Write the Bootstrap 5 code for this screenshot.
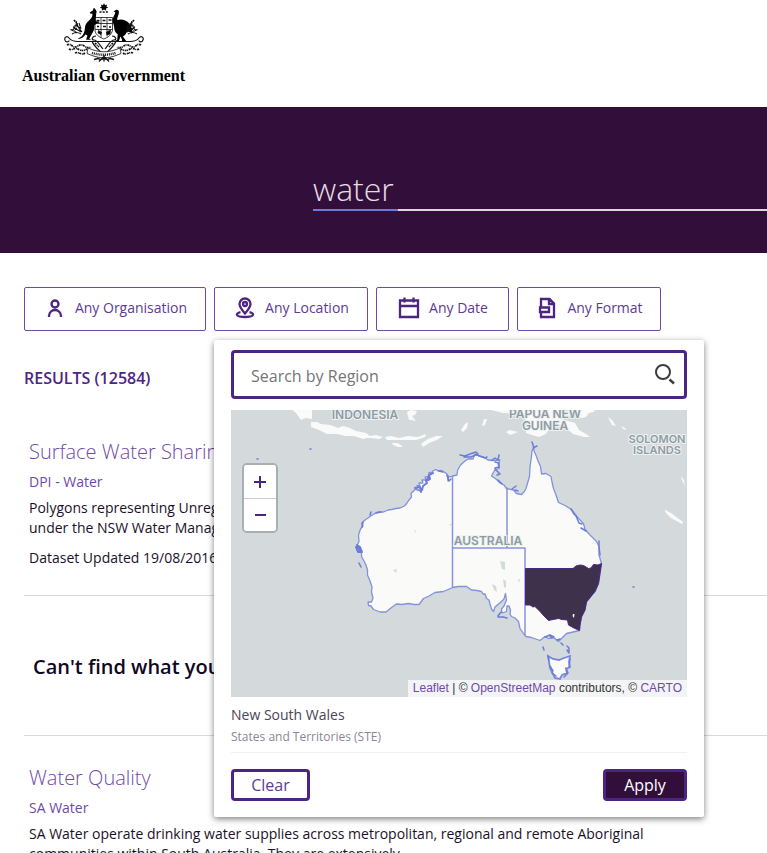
<!DOCTYPE html>
<html lang="en">
<head>
<meta charset="utf-8">
<meta name="viewport" content="width=device-width, initial-scale=1">
<title>Search results: water</title>
<link rel="stylesheet" href="https://cdn.jsdelivr.net/npm/bootstrap@5.3.0/dist/css/bootstrap.min.css">
<style>
:root { --violet: #4c2583; --violet-soft: #6f4aa5; --plum: #320f3a; --ink: #1b1029; }
body { font-family: "Open Sans", "Noto Sans", sans-serif; font-size: 14px; line-height: 20px; color: var(--ink); background: #fff; }
a { text-decoration: none; color: var(--violet-soft); }
.site-head { height: 107px; padding: 3px 24px 0; }
.brand { width: 159px; gap: 4px; color: #000; font: bold 16px/20px "Liberation Serif", serif; }
.brand svg { width: 80px; height: 59px; }
.banner { background: var(--plum); height: 146px; padding: 60px 0 0 313px; }
.query { position: relative; }
.query input { display: block; width: 100%; height: 44px; padding: 0; border: 0; border-bottom: 2px solid #ddd6dc; border-radius: 0; background: none; color: #e4dde2; font-size: 32px; font-weight: 300; line-height: 40px; outline: 0; }
.query::after { content: ""; position: absolute; left: 0; bottom: 0; width: 85px; height: 2px; background: #6d7ad8; }
main { padding: 34px 24px 0; }
.filters { gap: 8px; }
.filter { height: 44px; padding: 0 0 2px; border: 1px solid var(--violet-soft); border-radius: 2px; background: #fff; color: #5d3a96; font-size: 14px; }
.filter svg { width: 24px; height: 24px; fill: none; stroke: var(--violet); stroke-width: 2.300; }
.f-org { width: 182px; } .f-loc { width: 154px; } .f-date { width: 133px; } .f-fmt { width: 144px; }
.results { margin: 35px 0 48px; font-size: 16px; line-height: 24px; font-weight: 600; color: var(--violet); }
.dataset { padding: 0 5px; }
.dataset h2 { margin: 0 0 6px; font-size: 20px; line-height: 28px; font-weight: 300; white-space: nowrap; }
.dataset .org { margin: 0 0 6px; }
.dataset p { margin: 0 0 10px; max-width: 640px; }
.rule { margin: 27px -24px 0 0; border-top: 1px solid #d9d9de; }
.rule-next { margin: 0 -24px 28px 0; }
.ask { padding: 56px 9px 53px; font-size: 20px; line-height: 30px; font-weight: 600; margin: 0; color: #10061f; }
.region { position: absolute; z-index: 5; top: 53px; left: 0; width: 490px; padding: 10px 17px 16px; background: #fff; border-radius: 2px; box-shadow: 0 2px 6px rgba(0,0,0,.5); }
.region-search { height: 49px; border: 3px solid var(--violet); border-radius: 4px; padding: 0 8px 0 17px; }
.region-search input { min-width: 0; border: 0; outline: 0; padding: 2px 0 0; font-size: 16px; color: #444; background: none; }
.region-search input::placeholder { color: #757575; opacity: 1; }
.map { position: relative; margin-top: 11px; background: #d4dadc; }
.map > svg { display: block; width: 100%; }
.zoom { position: absolute; left: 11px; top: 53px; width: 36px; border: 2px solid #a9afb1; border-radius: 5px; background: #fff; overflow: hidden; }
.zoom button { height: 33px; padding: 0; border: 0; background: #fff; }
.zoom button + button { border-top: 1px solid #ccc; }
.zoom svg { width: 14px; height: 14px; stroke: var(--violet); stroke-width: 2; }
.credit { position: absolute; right: 0; bottom: 0; padding: 0 5px; background: #f2f4f5; color: #333; font: 12px/17px "Liberation Sans", Arial, sans-serif; white-space: nowrap; }
.credit a { color: var(--violet-soft); }
.place { margin: 8px 0 0; color: #4c4356; }
.place-type { margin: 2px 0 0; font-size: 12px; color: #8b8694; }
.region hr { margin: 5px 0 16px; border-color: #c9c9ce; }
.act { height: 32px; padding: 0; border: 3px solid var(--violet); border-radius: 4px; font-size: 16px; line-height: 24px; }
.act-clear { width: 79px; background: #fff; color: #5d3a96; }
.act-apply { width: 84px; background: var(--plum); color: #fff; }
</style>
</head>
<body>
<header class="site-head">
  <a class="brand d-flex flex-column align-items-center" href="#">
    <svg viewBox="0 0 80 59" fill="none" stroke="#111" stroke-width=".8" aria-hidden="true">
      <path fill="#000" d="M40 0l1 2.200 2.200-.8-.8 2.200 1.800 1.200-2.200.7.200 2.200-2.200-1.200-2.200 1.200.2-2.200-2.200-.7 1.800-1.200-.8-2.200 2.200.8z" stroke="none"/>
      <path d="M35.500 9h9" stroke-dasharray="2 1.200" stroke-width="1.500"/>
      <path fill="#fff" d="M31 14.500h17.500v13q-1.500 6-8.700 8.500Q32 33 31 28z"/>
      <path d="M31 20.500h17.500M31 26.500h17.500M37 14.500v20M43 14.500v19"/>
      <path stroke-width="1.600" d="M32.500 17.500h3M38.500 17.500h3M44.500 17h3M33 23.500h2M39 23.500h3M45 24h2"/>
      <path fill="#000" d="M34.500 27.500l3 2-.5 2-3-1.500zM42.500 29l4-2-.5 4-3 1z"/>
      <path fill="#000" stroke="none" d="M31.500 6.500l-1.200-1.500-.8.200-.5 2-1.500 1-1.700 1.200.2 1 2.400.4c.4 2-.6 4-2.400 5.800-2.400 2.400-4.500 4-5 7.400-.3 3-.5 5.500-2.200 8-1.300 1.800-3.500 3-5 3.800 3 .5 5.800-1.400 7.600-4.300l2 1-1.300 4.200h5l-1.800-1.200 2.700-4.800c1.800-2.600 2.600-5 2.400-8.500l3-2.200 2-.2-.3-1.300-3.200-.2c-.7-3 .4-5.500.3-7.900l.5-2z"/>
      <path fill="#000" stroke="none" d="M49.500 8.200l2.500-1.300c2-.4 3.200.8 2.900 3-.4 3-2.200 5-1.600 7.200 3.400-1.500 8.500-.7 11.500 3 2.200 2.600 3.200 6 3.600 10-2.300-1-3.500-1.300-5.500-1.300-1 2.800-2.700 4-4 4.800l3.300 4.400h-4.300l.3-1.200-1.800-3.400-1.500 4.800h-4.200l2.500-1.500.5-5.500c-2.800-2-3.500-4.300-3.600-7.500-.4-3-2-4.400-1.200-8 .4-2.700 2-4 2.400-6.500z"/>
      <path stroke-width="1.200" d="M1 37c-1-3 2-4.500 4-2s5 3.500 9 3.500h52c4 0 7-1 9-3.500s5-1 4 2-4 2-4 .5M5 37.500c0 2-4 2-4-.5M28 38c2 6 7 9 12 14 5-5 10-8 12-14M32 33c-4 0-5 4-2 4s5 4 9 9M48 33c4 0 5 4 2 4s-5 4-9 9"/>
      <path d="M12 18c1 4 3 8 6 11M9 25c3 0 5 2 8 4M8 31c3-2 6-2 9 0M11 22l5 3M15 20l2 6M68 18c-1 4-3 8-6 11M71 25c-3 0-5 2-8 4M73 31c-3-2-6-2-9 0M69 22l-5 3M65 20l-2 6" stroke-width="1.100"/>
      <path stroke-dasharray="2 .8 1 .5" stroke-width="1.700" d="M10 17l3 4-3 3 3 2-5 1 5 3M70 17l-3 4 3 3-3 2 5 1-5 3M3 42c3-2 5 1 7 2s5-3 8-2 5 4 9 2M5 46c3 2 6-2 9 0s6 2 9 0M11 50c4-2 6 3 10 0M77 42c-3-2-5 1-7 2s-5-3-8-2-5 4-9 2M75 46c-3 2-6-2-9 0s-6 2-9 0M69 50c-4-2-6 3-10 0M31 40l4 4M49 40l-4 4"/>
      <path fill="#fff" d="M24 45l4 1.500c8 3 16 3 24 0l4-1.500 1 5.500-5 2c-8 3-16 3-24 0l-5-2z"/>
      <path stroke-width="2.400" stroke-dasharray="1 .9" d="M28 49.800c8 2.600 16 2.600 24 0"/>
      <path stroke-width="1.300" d="M33 55c3 1 4 3 7 0 3 3 4 1 7 0M35 58.500l5-5 5 5M40 52v6.500M30 56.500l4-1M50 56.500l-4-1"/>
    </svg>
    <span class="text-nowrap">Australian Government</span>
  </a>
</header>

<form class="banner" role="search">
  <div class="query"><input type="text" value="water" aria-label="Search for open data"></div>
</form>

<main>
  <div class="filters d-flex flex-nowrap">
    <button type="button" class="filter f-org flex-shrink-0 d-flex align-items-center justify-content-center">
      <svg class="me-2" viewBox="0 0 24 24"><circle cx="12" cy="8" r="3.500"/><path d="M6 21v-1a6 6 0 0 1 12 0v1"/></svg>Any Organisation
    </button>
    <div class="position-relative flex-shrink-0">
      <button type="button" class="filter f-loc d-flex align-items-center justify-content-center" aria-expanded="true">
        <svg class="me-2" viewBox="0 0 24 24"><path d="M12 17.500C8.500 13.500 6.500 11 6.500 8a5.500 5.500 0 0 1 11 0c0 3-2 5.500-5.500 9.500z"/><circle cx="12" cy="8" r="2"/><path d="M7.500 16.200c-6 1.300-4.500 4.800 4.500 4.800s10.500-3.500 4.500-4.800"/></svg>Any Location
      </button>
      <section class="region" aria-label="Filter by region">
        <div class="region-search d-flex align-items-center">
          <input class="flex-grow-1" type="search" placeholder="Search by Region" aria-label="Search by Region">
          <svg width="22" height="22" viewBox="0 0 22 22" fill="none" stroke="#3c3c3c" stroke-width="2" aria-hidden="true"><circle cx="9" cy="8" r="7"/><path d="M15.500 15.500l4.500 4" stroke-width="2.500"/></svg>
        </div>
        <div class="map">
          <svg viewBox="231 410 456 287" role="img" aria-label="Map of Australia with New South Wales selected">
            <g fill="#fafaf8">
              <path d="M291 409h21v10l-6-1-5 2-5-7zM311 422l6 0 4 2 9 1 8 3 5-2 7 2 6 3 10 2 5 4-8 2-9-3-9 0-8-2-10 0-8-4-8-3zM364 434l6 2 6-1 7 2-4 2-8-1-7 0zM385 437l6-1 8 2 9-2 10 1 8-3-1 3-9 3-10 0-9 0-10 0zM392 443l6 0 5 4-5 0-5-2zM421 444l7-5 8-3 7 0-6 4-8 3-6 4zM407 412l4-2 6 1-2 4-3 1 4 5-4-1-3 0zM461 430l4-6 3-2-1 6-4 4zM484 419l3 0-2 6-3 1z"/>
              <path d="M487 409h108l-1 3-5 1-3 4-4 1-4-1 1-3-6-1-3 3-6-1-2 4 6 2 7 2 4 7 7 4 4 3-6 0-11-3-8-7-9-4-8 0 1 6-3 5-7 3-7-2-6-2 0-4 2-5-4-6-9-4-12-1z"/>
              <path d="M506 432l4-2 8 2-8 3zM608 417l4 3 4 6-4-1zM621 426l4 2 2 2-4-1zM665 510l6 3 12 9-1 2-11-6-6-6zM681 476l3 4 1 6-3-6z"/>
              <path stroke="#8292dc" stroke-width="1.300" stroke-linejoin="round" d="M452.700 476L450 477 448.500 476 448 481 447 474 444 472 441.500 470.500 438 471 436 469.500 433 471 431 473 429 472.500 428.500 476 425 477 426 480 422 480 423 483 419 483 420 486 417 485.500 419 487 416 488 420 491 415 489.500 411 493.500 411.500 497 409 500 407 503 404.500 506 400 508 396 508.500 391.500 509.500 388 510 383.500 512 377.500 512 374 514 371.500 515.500 368 518 365 520 361.500 523.500 363 526 360.500 529 358.500 535 359 541.500 356.500 546.500 361.500 550 361.500 556.500 364 561 366 565 367.500 570 367.500 575 370 581 372 587 371.500 592 373 598 371.500 602 368 602 368.500 605.500 371 606 373.500 609.500 380 612 386 612 391.500 607.500 396.500 604 402 604.500 408.500 603.500 414 604.500 419 604.500 423.500 598.500 429 596 435 592.500 443.500 591.500 452.700 587.500 458 586.500 466.500 586.500 471.500 590 477 590.500 481.500 591.500 483 594 485 594 486.500 598.500 489 600 490 604 491.500 609 493.500 611.500 495 607 498 604.500 501.500 601.500 504 599 505.500 593.500 506.500 600 504 606 501.500 609 502 613 506.500 611.500 507 606 509 606 510.500 610 510 614 511.500 616.500 515 618 518.500 621.500 520 628.500 523.500 633.500 526 636.500 531.500 637.500 540 640.500 545 636.500 548.500 638.500 553.500 637.500 558.500 641.500 562 638 566.500 633.500 573 632 579.500 630.500 580 625 581.500 616.500 585 610 586.500 601.500 595 591.500 598.500 583.500 600 573.500 601.500 563.500 599 555 599 546.500 596.500 541.500 590 535 585 529.500 583.500 523.500 578.500 518.500 575 514 571.500 509.500 565 505.500 558.500 502.500 556 495 553.500 488.500 552 482 551 476.500 546 473.500 541.500 474 540.500 466.500 538 461 536.500 456.500 534 451 533.500 447 532 451 531.500 456.500 530 466.500 529.500 476.500 526 488.500 524 492 521.500 494.500 516.500 493.500 513.500 490 506.500 488.500 504 485 500 483 496 479 491.500 476 493 473 495 470 499.500 468 498 464 500 460 493.500 460.500 488 460 483.500 457 479 456 475 454 473 459 468 459 465 461 460.500 465 457.500 470.500 457 475z"/>
              <path stroke="#7787dc" stroke-width="1.800" d="M548 656l5 3 6 1 5-2 6-2-1 6 1 5-4 2 1 4-5 2-2 4-5-1-2-4-3-6z"/>
            </g>
            <g fill="none" stroke="#6c7cd9" stroke-width="1.500" stroke-linejoin="round" stroke-linecap="round">
              <path d="M452.500 476v111.500M452.500 548H525v87M507 488v60" stroke="#8795df"/>
              <path stroke-width="2" d="M429 476l-3 5 1 2-4 3-1 4-3-3-4 1M433 473l-4 2 1 4-4 2M420 487l1 5M356 547l2 5 4 0-2-5-3-2 3 6"/>
              <path d="M439 471l4 1M370 515l1-3M376 513l5-1M361 567l-2-4M363 522l-1 5M460 455l5 1 5-2 6-2 2 2-7 3-7 0M477 455l8 3 2-1M492 460l3-2 3 2 1-5M495 462l4 1 0 4-4 1M495 469l5 5-3 1M447 475l2 6 2-2M498 480l4 4M512 489l4-3M515 490l3 1M532 442l2 6M537 446l-2 1M571 509l3 5 2 2M576 516l3 7 3 1M581 528l5 3M599 541l0 6 1 8M498 617h5l4 1M501 612l-3 4M545 637l5-2 4 2M549 635l3 3M557 640l3-1M543 647l1 3M561 643l2 2M567 646l2 2 0 5-2-3M548 656l1 4M570 659l-1 8M566 668l2 5-4 4M556 676l-4-3M553 671l-3-5M310 449h1M257 459h1M633 587h1"/>
            </g>
            <path fill="#3d314b" stroke="#4c2583" stroke-linejoin="round" d="M525.500 568.500L573 568.500 576 566 580 565 583.500 565.500 588.500 568.500 591 568 593.500 564.500 598 565 601.500 563.500 600 573.500 598.500 583.500 595 591.500 592 595 589 599 586.500 602 585 610 581.500 617 580 625 579.500 630.500 574 628 568.500 625 567.500 620 562 619.500 558.500 618.500 553 619.500 548.500 620.500 544 616 540 611.500 535 606.500 533 607 530 605 525.500 605z"/>
            <path fill="#fafaf8" d="M573 614l1.500 0-.5 4-1.500-2z"/>
            <path fill="#d4dadc" d="M500 561l5 1 0 8-3-1zM492 584l4 2 1 6-3-2zM503 579l3 2 0 7-2-1zM518 579l2 0-1 4zM414 530l2 1-1 2zM393 570l4-1-1 4zM449 524l3 0-1 2z"/>
            <g fill="#8d9ca4" stroke="#eef1f1" stroke-width="2" paint-order="stroke" font-family="Inter, sans-serif" font-size="12" font-weight="600" text-anchor="middle">
              <text x="365" y="419">INDONESIA</text><text x="545" y="418">PAPUA NEW</text><text x="545" y="430">GUINEA</text>
              <text x="657" y="443" font-size="11">SOLOMON</text><text x="657" y="454" font-size="11">ISLANDS</text><text x="488" y="545">AUSTRALIA</text>
            </g>
          </svg>
          <div class="zoom d-flex flex-column">
            <button type="button" aria-label="Zoom in" class="d-flex align-items-center justify-content-center"><svg viewBox="0 0 14 14"><path d="M7 1v12M1 7h12"/></svg></button>
            <button type="button" aria-label="Zoom out" class="d-flex align-items-center justify-content-center"><svg viewBox="0 0 14 14"><path d="M2 7h11"/></svg></button>
          </div>
          <div class="credit"><a href="#">Leaflet</a> | © <a href="#">OpenStreetMap</a> contributors, © <a href="#">CARTO</a></div>
        </div>
        <p class="place">New South Wales</p>
        <p class="place-type">States and Territories (STE)</p>
        <hr>
        <div class="d-flex justify-content-between">
          <button type="button" class="act act-clear">Clear</button>
          <button type="button" class="act act-apply">Apply</button>
        </div>
      </section>
    </div>
    <button type="button" class="filter f-date flex-shrink-0 d-flex align-items-center justify-content-center">
      <svg class="me-2" viewBox="0 0 24 24"><path d="M3 4.500h18V21H3zM3 10h18M7.500 1.500v5M16.500 1.500v5"/></svg>Any Date
    </button>
    <button type="button" class="filter f-fmt flex-shrink-0 d-flex align-items-center justify-content-center">
      <svg class="me-2" viewBox="0 0 24 24"><path d="M6 11V3h8.500l4.500 4.500V21H6v-4M14 3v5h5M5 11.500h9v4.500H5z"/></svg>Any Format
    </button>
  </div>

  <div class="results">RESULTS (12584)</div>

  <article class="dataset">
    <h2><a href="#">Surface Water Sharing Plan Regions</a></h2>
    <div class="org"><a href="#">DPI - Water</a></div>
    <p>Polygons representing Unregulated river water sources<br>under the NSW Water Management Act 2000</p>
    <p>Dataset Updated 19/08/2016</p>
  </article>
  <div class="rule"></div>
  <p class="ask">Can't find what you're looking for?</p>
  <div class="rule rule-next"></div>
  <article class="dataset">
    <h2><a href="#">Water Quality</a></h2>
    <div class="org"><a href="#">SA Water</a></div>
    <p>SA Water operate drinking water supplies across metropolitan, regional and remote Aboriginal communities within South Australia. They are extensively...</p>
  </article>
</main>
<script src="https://cdn.jsdelivr.net/npm/bootstrap@5.3.0/dist/js/bootstrap.bundle.min.js"></script>
</body>
</html>
